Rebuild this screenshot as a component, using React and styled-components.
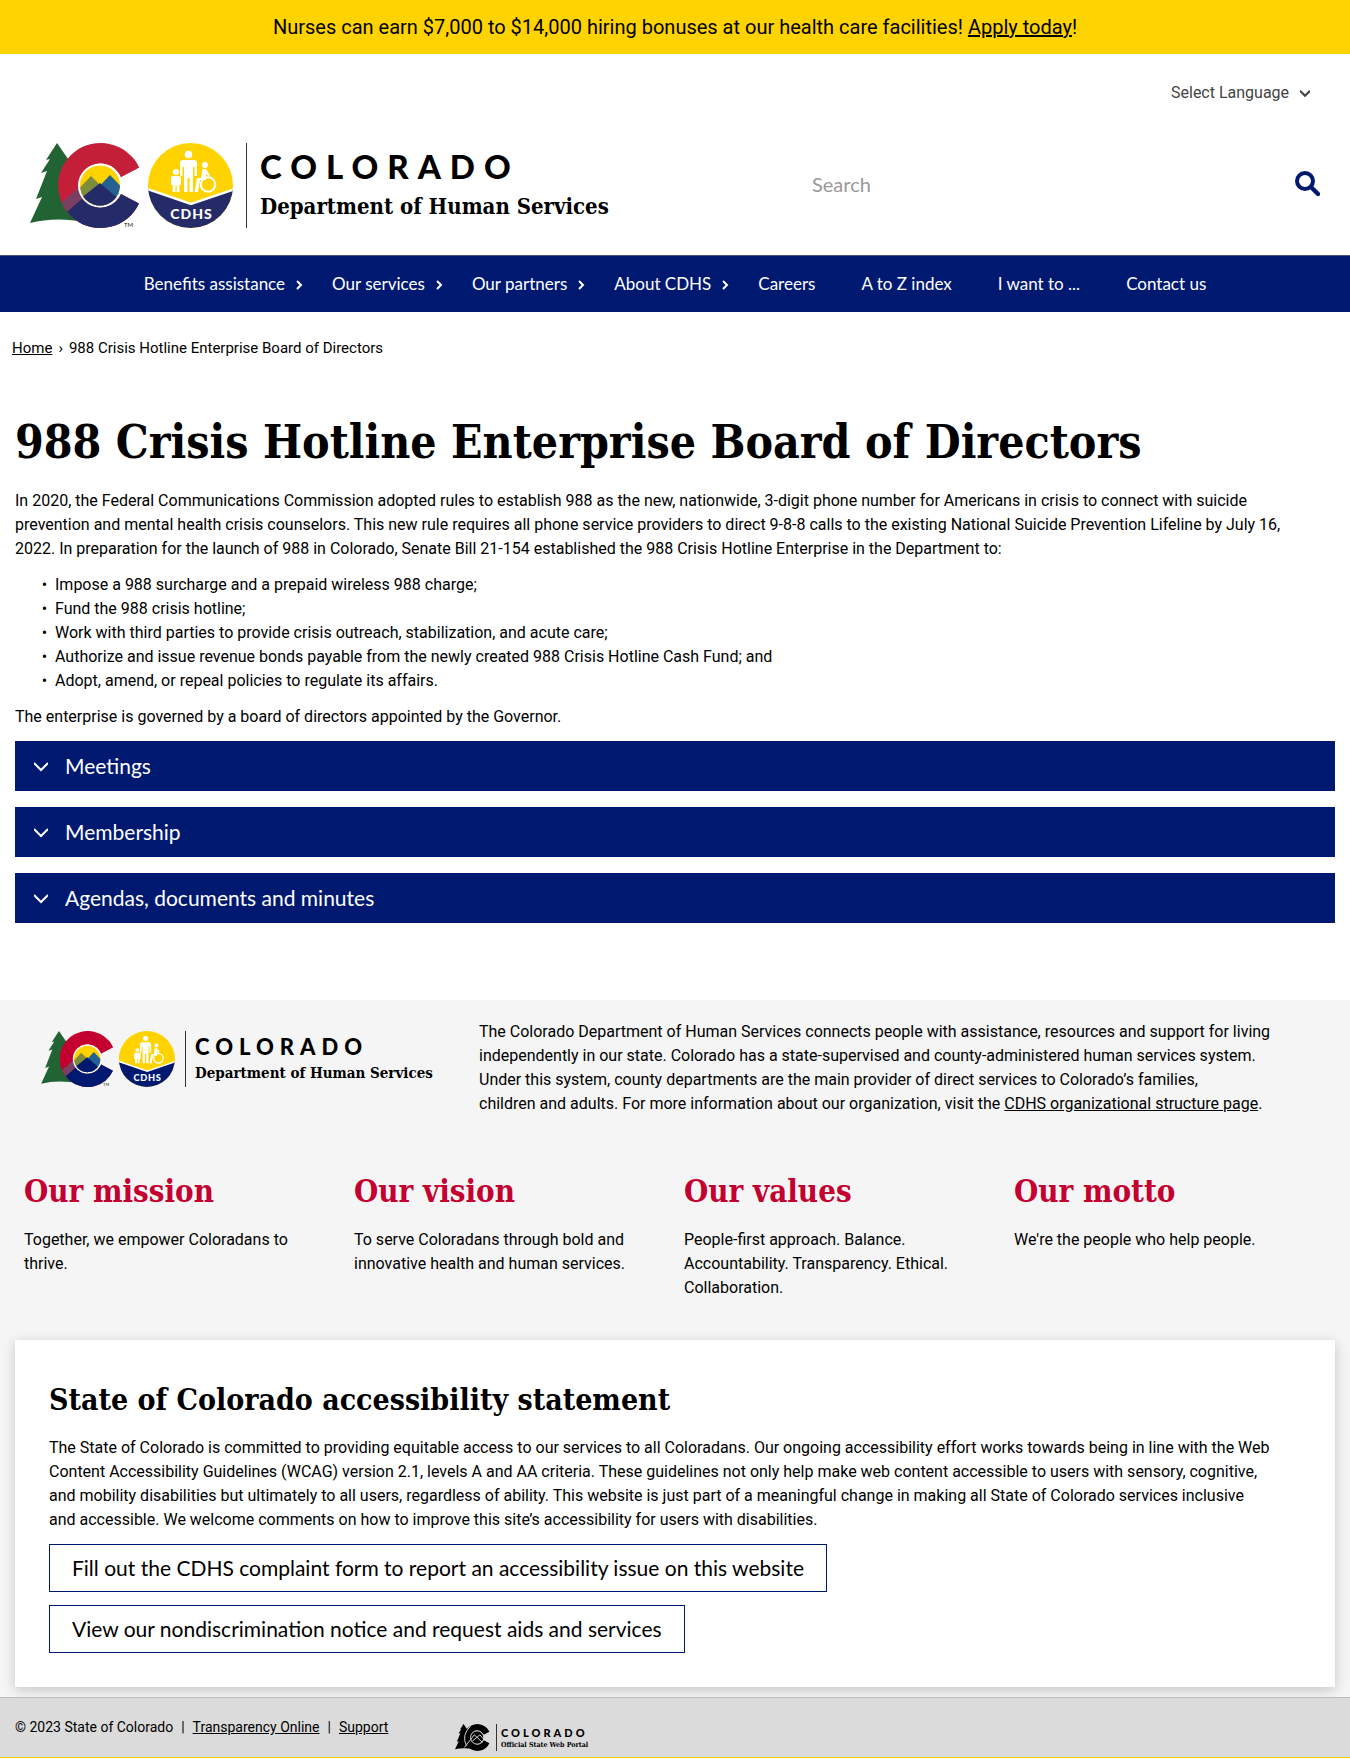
import React, { useState } from "react";
import styled, { createGlobalStyle } from "styled-components";

const navy = "#001970";
const crimson = "#c3002f";
const body = `Roboto, "Open Sans", sans-serif`;
const display = `Lato, "Open Sans", sans-serif`;
const slab = `"DejaVu Serif Condensed", "DejaVu Serif", serif`;

const GlobalStyle = createGlobalStyle`
  *, *::before, *::after { box-sizing: border-box; }
  body {
    margin: 0;
    background: #fff;
    color: #000;
    font: 16px/24px ${body};
  }
  a { color: inherit; }
  p, ul, h1, h2 { margin: 0; }
`;

const Banner = styled.div`
  background: #fed300;
  padding: 13px 16px;
  text-align: center;
  font-size: 20px;
  line-height: 28px;
`;

const LanguageRow = styled.div`
  display: flex;
  justify-content: flex-end;
  padding: 27px 40px 0;
`;

const LanguageBox = styled.div`
  display: flex;
  align-items: center;
  color: #444;
`;

const LanguageSelect = styled.select`
  appearance: none;
  border: 0;
  padding: 0 22px 0 0;
  margin-right: -12px;
  background: transparent;
  color: inherit;
  font: 16px/24px ${body};
`;

const Masthead = styled.header`
  display: flex;
  align-items: center;
  justify-content: space-between;
  padding: 38px 30px 27px;
`;

const LogoLink = styled.a`
  display: flex;
  align-items: center;
  color: #000;
  text-decoration: none;
`;

const Wordmark = styled.span`
  display: flex;
  flex-direction: column;
  justify-content: center;
  white-space: nowrap;
  border-left: 1px solid #333;
  height: ${(p) => p.$s.height}px;
  margin-left: ${(p) => p.$s.gap}px;
  padding-left: ${(p) => p.$s.pad}px;
`;

const StateName = styled.span`
  font-family: ${display};
  font-weight: 900;
  font-size: ${(p) => p.$s.name}px;
  line-height: ${(p) => p.$s.nameLine}px;
  letter-spacing: ${(p) => p.$s.track}px;
`;

const AgencyName = styled.span`
  font-family: ${slab};
  font-weight: 700;
  font-size: ${(p) => p.$s.agency}px;
  line-height: ${(p) => p.$s.agencyLine}px;
`;

const SearchForm = styled.form`
  display: flex;
  align-items: center;
  width: 508px;
  padding-bottom: 4px;
`;

const SearchInput = styled.input`
  flex: 1;
  min-width: 0;
  border: 0;
  padding: 0;
  background: transparent;
  font: 20px/28px ${display};
  &::placeholder { color: #999; opacity: 1; }
`;

const IconButton = styled.button`
  display: flex;
  border: 0;
  padding: 0;
  background: none;
  color: ${navy};
`;

const NavBar = styled.nav`
  background: ${navy};
  border-top: 1px solid #4d5684;
  display: flex;
  justify-content: center;
`;

const NavLink = styled.a`
  display: flex;
  align-items: center;
  gap: 11px;
  padding: 16px ${(p) => (p.$menu ? 6 : 23)}px 16px 23px;
  color: #fff;
  font: 17px/24px ${display};
  text-decoration: none;
  white-space: nowrap;
`;

const Breadcrumb = styled.nav`
  display: flex;
  align-items: center;
  gap: 6px;
  padding: 24px 12px;
  font-size: 15px;
`;

const Main = styled.main`
  display: flex;
  flex-direction: column;
  gap: 12px;
  padding: 26px 15px 77px;
`;

const Title = styled.h1`
  font: 700 46px/64px ${slab};
  margin-bottom: 3px;
`;

const Intro = styled.p`
  padding-right: 20px;
`;

const Bullets = styled.ul`
  padding-left: 40px;
  list-style-type: "•\\00a0\\00a0";
`;

const Accordions = styled.div`
  display: flex;
  flex-direction: column;
  gap: 16px;
`;

const AccordionButton = styled.button`
  display: flex;
  align-items: center;
  gap: 17px;
  width: 100%;
  height: 50px;
  padding: 0 19px;
  border: 0;
  background: ${navy};
  color: #fff;
  font: 21px/28px ${display};
  text-align: left;
`;

const SiteFooter = styled.footer`
  background: #f5f5f5;
`;

const About = styled.section`
  display: grid;
  grid-template-columns: 438px minmax(0, 1fr);
  align-items: start;
  padding: 20px 60px 0 41px;
`;

const AboutLogo = styled.div`
  padding-top: 11px;
`;

const Values = styled.section`
  display: grid;
  grid-template-columns: repeat(4, 1fr);
  padding: 54px 15px 40px;
`;

const Value = styled.article`
  padding: 0 40px 0 9px;
`;

const ValueTitle = styled.h2`
  font: 700 31px/42px ${slab};
  color: ${crimson};
  margin-bottom: 16px;
`;

const Card = styled.section`
  margin: 0 15px;
  padding: 39px 34px 34px;
  background: #fff;
  box-shadow: 0 3px 12px rgba(0, 0, 0, 0.2);
`;

const CardTitle = styled.h2`
  font: 700 30px/42px ${slab};
  margin-bottom: 15px;
`;

const CardLinks = styled.div`
  display: flex;
  flex-direction: column;
  align-items: flex-start;
  gap: 13px;
  padding-top: 12px;
`;

const OutlineLink = styled.a`
  border: 1px solid ${navy};
  padding: 9px 22px;
  font: 21px/28px ${display};
  text-decoration: none;
`;

const Legal = styled.div`
  position: relative;
  display: flex;
  align-items: flex-start;
  margin-top: 10px;
  padding: 17px 15px 6px;
  background: #dbdbdb;
  border-top: 1px solid #bdbdbd;
  border-bottom: 1px solid #fed300;
  font-size: 14px;
`;

const LegalText = styled.p`
  display: flex;
  gap: 8px;
  width: 440px;
`;

const LegalLogo = styled.div`
  padding-top: 9px;
`;

const sizes = {
  header: { width: 206, height: 85, gap: 10, pad: 13, name: 33, nameLine: 42, track: 9, agency: 22, agencyLine: 39 },
  footer: { width: 136, height: 56, gap: 8, pad: 9, name: 22, nameLine: 28, track: 6, agency: 15, agencyLine: 25 },
  portal: { width: 35, height: 27, gap: 5, pad: 4, name: 11, nameLine: 13, track: 3, agency: 7, agencyLine: 11 },
};

const TREE = "M27 0 L16 17 L20 16 L11 30 L17 28 L6 56 L12 54 L0 80 Q27 73 60 80 L60 40 L48 24 L45 26 Z";
const C_SHAPE = "M109 24.5 A42.5 42.5 0 1 0 109 60.5 L91 51 A22 22 0 1 1 91 34 Z";

function Emblem({ size, green = "#226334", red = "#c41f38", blue = "#252b69" }) {
  return (
    <svg width={size.width} height={size.height} viewBox="0 0 206 85" aria-hidden="true">
      <defs>
        <clipPath id={`c-${size.width}`}><path d={C_SHAPE} /></clipPath>
        <clipPath id={`sun-${size.width}`}><circle cx="70" cy="42.5" r="20" /></clipPath>
        <clipPath id={`seal-${size.width}`}><circle cx="161.500" cy="42.5" r="42.5" /></clipPath>
      </defs>
      <path d={TREE} fill={green} />
      <path d={C_SHAPE} fill={red} />
      <g clipPath={`url(#c-${size.width})`}>
        <path d="M24 66 L54 40 L120 85 L30 90 Z" fill="#7b3f63" />
        <path d="M37 69 L70 40 L125 40 L125 90 L50 90 Z" fill={blue} />
        <path d="M60 42 L115 5 L115 40 L90 42 Z" fill={red} />
      </g>
      <circle cx="70" cy="42.5" r="22" fill="#fff" />
      <g clipPath={`url(#sun-${size.width})`}>
        <path d="M49 20 H93 V64 H49 Z" fill="#fed300" />
        <path d="M43 52 L61 33 L79 51 V66 H43 Z" fill="#7f8c3b" />
        <path d="M63 50 L80 32 L99 52 V66 H63 Z" fill="#236192" />
        <path d="M45 60 L70 40 L95 62 V68 H45 Z" fill={blue} />
      </g>
      <text x="94" y="84" fontSize="6" fontFamily="Lato, sans-serif" fill="#222">TM</text>
      <g transform="translate(-1 0)">
        <g clipPath={`url(#seal-${size.width})`}>
          <path d="M118 0 H206 V85 H118 Z" fill="#fed300" />
          <path d="M118 46 L162 61 L206 46 V85 H118 Z" fill={blue} />
          <path d="M118 46 L162 61 L206 46" fill="none" stroke="#fff" strokeWidth="2.4" />
        </g>
        <g fill="#fff">
          <circle cx="159.500" cy="11.500" r="3.800" />
          <path d="M154 17 H165 Q168 17 168 20 V33 H165.500 V24 H164 V49 H160.500 V35 H158.500 V49 H155 V24 H153.500 V33 H151 V20 Q151 17 154 17 Z" />
          <circle cx="147" cy="29" r="3" />
          <path d="M144 33 H150 Q152 33 152 35 V42 H150.500 V49 H147.600 V42 H146.500 V49 H143.600 V42 H142 V35 Q142 33 144 33 Z" />
          <circle cx="176" cy="22" r="3" />
          <path d="M173.500 26 H177 L181 32 L179.500 33.500 L177 31 V37 H171 L169 49 H165.500 L168 35 H172 Z" />
        </g>
        <circle cx="179" cy="41.500" r="7.200" fill="none" stroke="#fff" strokeWidth="2" />
        <text x="162.500" y="76" textAnchor="middle" fontSize="14" fontWeight="900" letterSpacing="1" fontFamily="Lato, sans-serif" fill="#fff">CDHS</text>
      </g>
    </svg>
  );
}

function PortalEmblem() {
  return (
    <svg width="36" height="27" viewBox="0 0 114 85" aria-hidden="true">
      <path d={TREE} />
      <path d={C_SHAPE} />
      <circle cx="70" cy="42.5" r="21" />
      <g fill="none" stroke="#dbdbdb" strokeWidth="3">
        <circle cx="70" cy="42.5" r="21" />
        <path d="M30 74 L61 34 L87 58 M55 54 L79 34 L91 48" />
        <path d="M48 8 Q20 35 36 68" />
      </g>
    </svg>
  );
}

function Logo({ size, agency, emblem }) {
  return (
    <LogoLink href="#">
      {emblem}
      <Wordmark $s={size}>
        <StateName $s={size}>COLORADO</StateName>
        <AgencyName $s={size}>{agency}</AgencyName>
      </Wordmark>
    </LogoLink>
  );
}

function Chevron({ size = 7, down, weight = 2 }) {
  return down ? (
    <svg width={size} height={size} viewBox="0 0 14 14" aria-hidden="true">
      <path d="M0 4 L7 11 L14 4" fill="none" stroke="currentColor" strokeWidth={weight} />
    </svg>
  ) : (
    <svg width={size} height="11" viewBox="0 0 7 11" aria-hidden="true">
      <path d="M1 2 L5 6 L1 10" fill="none" stroke="currentColor" strokeWidth={weight} />
    </svg>
  );
}

const navItems = [
  ["Benefits assistance", true],
  ["Our services", true],
  ["Our partners", true],
  ["About CDHS", true],
  ["Careers"],
  ["A to Z index"],
  ["I want to ..."],
  ["Contact us"],
];

const duties = [
  "Impose a 988 surcharge and a prepaid wireless 988 charge;",
  "Fund the 988 crisis hotline;",
  "Work with third parties to provide crisis outreach, stabilization, and acute care;",
  "Authorize and issue revenue bonds payable from the newly created 988 Crisis Hotline Cash Fund; and",
  "Adopt, amend, or repeal policies to regulate its affairs.",
];

const values = [
  ["Our mission", "Together, we empower Coloradans to thrive."],
  ["Our vision", "To serve Coloradans through bold and innovative health and human services."],
  ["Our values", "People-first approach. Balance. Accountability. Transparency. Ethical. Collaboration."],
  ["Our motto", "We're the people who help people."],
];

export default function App() {
  const [open, setOpen] = useState(null);
  return (
    <>
      <GlobalStyle />
      <Banner>
        Nurses can earn $7,000 to $14,000 hiring bonuses at our health care facilities! <a href="#">Apply today</a>!
      </Banner>
      <LanguageRow>
        <LanguageBox>
          <LanguageSelect aria-label="Select Language">
            <option>Select Language</option>
          </LanguageSelect>
          <Chevron size={10} down weight={3} />
        </LanguageBox>
      </LanguageRow>
      <Masthead>
        <Logo size={sizes.header} agency="Department of Human Services" emblem={<Emblem size={sizes.header} />} />
        <SearchForm role="search" onSubmit={(e) => e.preventDefault()}>
          <SearchInput type="search" placeholder="Search" aria-label="Search" />
          <IconButton type="submit" aria-label="Submit search">
            <svg width="25" height="25" viewBox="0 0 25 25" aria-hidden="true">
              <circle cx="10" cy="10" r="8" fill="none" stroke="currentColor" strokeWidth="4" />
              <path d="M16 16 L23 23" stroke="currentColor" strokeWidth="4.4" strokeLinecap="round" />
            </svg>
          </IconButton>
        </SearchForm>
      </Masthead>
      <NavBar aria-label="Main">
        {navItems.map(([label, menu]) => (
          <NavLink key={label} href="#" $menu={menu}>
            {label}
            {menu && <Chevron />}
          </NavLink>
        ))}
      </NavBar>
      <Breadcrumb aria-label="Breadcrumb">
        <a href="#">Home</a>
        <span>›</span>
        <span>988 Crisis Hotline Enterprise Board of Directors</span>
      </Breadcrumb>
      <Main>
        <Title>988 Crisis Hotline Enterprise Board of Directors</Title>
        <Intro>
          In 2020, the Federal Communications Commission adopted rules to establish 988 as the new, nationwide, 3-digit
          phone number for Americans in crisis to connect with suicide prevention and mental health crisis counselors.
          This new rule requires all phone service providers to direct 9-8-8 calls to the existing National Suicide
          Prevention Lifeline by July 16, 2022. In preparation for the launch of 988 in Colorado, Senate Bill 21-154
          established the 988 Crisis Hotline Enterprise in the Department to:
        </Intro>
        <Bullets>
          {duties.map((d) => (
            <li key={d}>{d}</li>
          ))}
        </Bullets>
        <p>The enterprise is governed by a board of directors appointed by the Governor.</p>
        <Accordions>
          {["Meetings", "Membership", "Agendas, documents and minutes"].map((t) => (
            <AccordionButton key={t} type="button" aria-expanded={open === t} onClick={() => setOpen(open === t ? null : t)}>
              <Chevron size={14} down />
              {t}
            </AccordionButton>
          ))}
        </Accordions>
      </Main>
      <SiteFooter>
        <About>
          <AboutLogo>
            <Logo
              size={sizes.footer}
              agency="Department of Human Services"
              emblem={<Emblem size={sizes.footer} red={crimson} blue={navy} />}
            />
          </AboutLogo>
          <p>
            The Colorado Department of Human Services connects people with assistance, resources and support for living
            independently in our state. Colorado has a state-supervised and county-administered human services system.
            Under this system, county departments are the main provider of direct services to Colorado’s families,
            <br />
            children and adults. For more information about our organization, visit the{" "}
            <a href="#">CDHS organizational structure page</a>.
          </p>
        </About>
        <Values>
          {values.map(([title, text]) => (
            <Value key={title}>
              <ValueTitle>{title}</ValueTitle>
              <p>{text}</p>
            </Value>
          ))}
        </Values>
        <Card>
          <CardTitle>State of Colorado accessibility statement</CardTitle>
          <p>
            The State of Colorado is committed to providing equitable access to our services to all Coloradans. Our
            ongoing accessibility effort works towards being in line with the Web Content Accessibility Guidelines
            (WCAG) version 2.1, levels A and AA criteria. These guidelines not only help make web content accessible to
            users with sensory, cognitive,
            <br />
            and mobility disabilities but ultimately to all users, regardless of ability. This website is just part of a
            meaningful change in making all State of Colorado services inclusive
            <br />
            and accessible. We welcome comments on how to improve this site’s accessibility for users with disabilities.
          </p>
          <CardLinks>
            <OutlineLink href="#">
              Fill out the CDHS complaint form to report an accessibility issue on this website
            </OutlineLink>
            <OutlineLink href="#">View our nondiscrimination notice and request aids and services</OutlineLink>
          </CardLinks>
        </Card>
        <Legal>
          <LegalText>
            <span>© 2023 State of Colorado</span>
            <span>|</span>
            <a href="#">Transparency Online</a>
            <span>|</span>
            <a href="#">Support</a>
          </LegalText>
          <LegalLogo>
            <Logo size={sizes.portal} agency="Official State Web Portal" emblem={<PortalEmblem />} />
          </LegalLogo>
        </Legal>
      </SiteFooter>
    </>
  );
}
